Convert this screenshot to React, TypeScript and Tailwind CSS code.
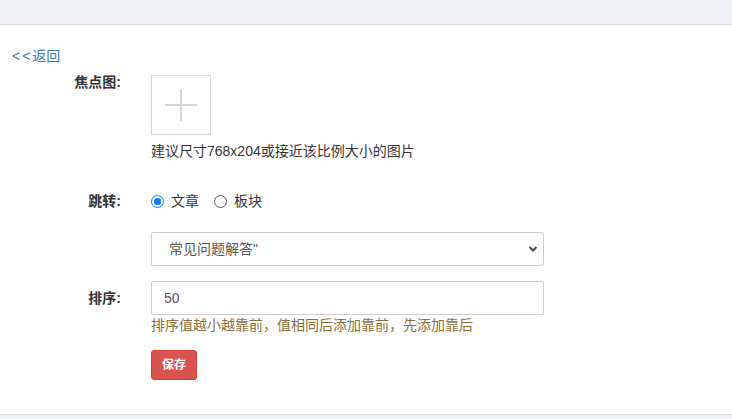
import React from "react";

export default function App() {
  const font = {
    fontFamily: '"Liberation Sans", "Noto Sans CJK SC", sans-serif',
  };
  return (
    <div className="w-[732px] h-[419px] bg-[#f0f1f5] overflow-hidden text-[14px] text-[#333]" style={font}>
      <div className="h-[25px] bg-[#f0f1f5] border-b border-[#d9d9dd]" />
      <div className="h-[390px] bg-white border-b border-[#dcdde3] pt-[22px]">
        <a className="block ml-[12px] text-[#337ab7] leading-[18px] h-[18px] text-[14px]">
          <span className="tracking-[2px]">&lt;&lt;</span>返回
        </a>

        <div className="flex mt-[10px]">
          <div className="w-[121px] text-right font-bold leading-[15px]">焦点图:</div>
          <div className="ml-[30px] flex flex-col">
            <div className="w-[60px] h-[60px] border border-[#d6d6d6] flex items-center justify-center">
              <svg width="34" height="34" viewBox="0 0 34 34">
                <line x1="17" y1="1" x2="17" y2="33" stroke="#d6d6d6" strokeWidth="2" />
                <line x1="1" y1="17" x2="33" y2="17" stroke="#d6d6d6" strokeWidth="2" />
              </svg>
            </div>
            <div className="mt-[7px] leading-[18px]">建议尺寸768x204或接近该比例大小的图片</div>
          </div>
        </div>

        <div className="flex mt-[31px] h-[20px] items-center">
          <div className="w-[121px] text-right font-bold">跳转:</div>
          <div className="ml-[30px] flex items-center">
            <span className="w-[13px] h-[13px] rounded-full border border-[#0b7cf0] flex items-center justify-center">
              <span className="w-[7px] h-[7px] rounded-full bg-[#0b7cf0]" />
            </span>
            <span className="ml-[7px]">文章</span>
            <span className="ml-[15px] w-[13px] h-[13px] rounded-full border border-[#555]" />
            <span className="ml-[7px]">板块</span>
          </div>
        </div>

        <div className="flex mt-[21px]">
          <div className="w-[121px]" />
          <div className="ml-[30px] w-[393px] h-[34px] border border-[#ccc] rounded-[2px] flex items-center pl-[17px] pr-[5px] text-[#555]">
            <span className="flex-1">常见问题解答"</span>
            <svg width="10" height="8" viewBox="0 0 10 8">
              <path d="M1.5 2 L5 5.5 L8.5 2" fill="none" stroke="#444" strokeWidth="2" />
            </svg>
          </div>
        </div>

        <div className="flex mt-[15px]">
          <div className="w-[121px] text-right font-bold leading-[34px]">排序:</div>
          <div className="ml-[30px] flex flex-col">
            <div className="w-[393px] h-[34px] border border-[#ccc] rounded-[2px] flex items-center pl-[12px] text-[14px] text-[#555]">50</div>
            <div className="mt-[1px] leading-[18px] text-[#8a6d3b]">排序值越小越靠前，值相同后添加靠前，先添加靠后</div>
            <button className="mt-[16px] w-[46px] h-[30px] bg-[#d9534f] border border-[#d43f3a] rounded-[3px] text-white font-bold text-[12px]">保存</button>
          </div>
        </div>
      </div>
    </div>
  );
}
